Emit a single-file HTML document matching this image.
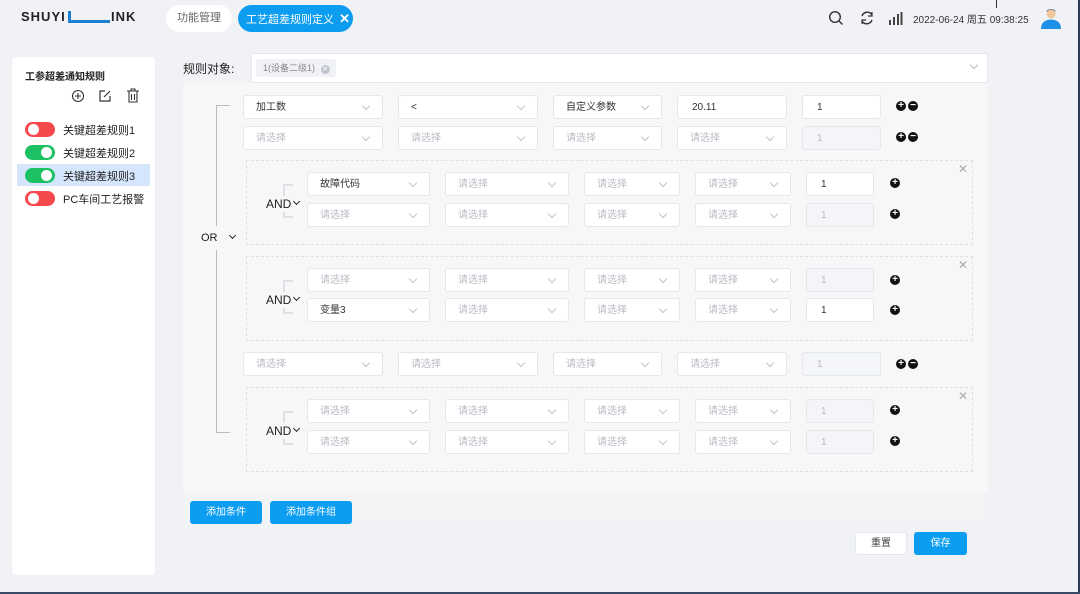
<!DOCTYPE html>
<html><head><meta charset="utf-8"><style>
*{margin:0;padding:0;box-sizing:border-box}
body{width:1080px;height:594px;background:#f0f2f5;font-family:"Liberation Sans","Noto Sans CJK SC",sans-serif;position:relative;overflow:hidden}
.a{position:absolute}
.s{position:absolute;height:24px;background:#fff;border:1px solid #e4e7ed;border-radius:3px;font-size:10px;color:#b8bcc4;padding-left:12px;line-height:24px}
.s.v{color:#333}
.s::after{content:"";position:absolute;right:13px;top:7px;width:5px;height:5px;border-right:1px solid #c0c4cc;border-bottom:1px solid #c0c4cc;transform:rotate(45deg)}
.i{position:absolute;height:24px;background:#fff;border:1px solid #e4e7ed;border-radius:3px;font-size:10px;color:#333;padding-left:14px;line-height:24px}
.i.d{background:#f3f5f9;color:#bbb}
.pm{position:absolute;width:10px;height:10px;border-radius:50%;background:#111;color:#fff;font-size:10px;line-height:10px;text-align:center;font-weight:bold}
.g{position:absolute;left:246px;width:727px;height:85px;border:1px dashed #e0e0e0}
.x{position:absolute;font-size:12px;color:#aaa;line-height:12px}
.and{position:absolute;font-size:12px;color:#222}
.br{position:absolute;left:283px;width:10px;height:34px;border:2px solid #dde0e6;border-right:none}
.tg{position:absolute;left:25px;width:30px;height:15px;border-radius:8px}
.tg::after{content:"";position:absolute;top:2px;width:11px;height:11px;border-radius:50%;background:#fff}
.r{background:#f5494e}.r::after{left:3px}
.gr{background:#1cc163}.gr::after{right:3px}
.it{position:absolute;left:63px;font-size:11px;color:#222}
.btn{position:absolute;height:23px;border-radius:3px;font-size:10px;text-align:center;line-height:23px}
</style></head><body>
<div class="a" style="left:996px;top:0;width:1px;height:8px;background:#333"></div>
<div class="a" style="right:0;top:0;width:2px;height:594px;background:#2a3a55"></div>
<div class="a" style="left:0;bottom:0;width:1080px;height:2px;background:#3a4a66"></div>
<!-- logo -->
<div class="a" style="left:21px;top:9px;font-size:13px;font-weight:bold;color:#222;letter-spacing:1px">SHUYI</div>
<div class="a" style="left:70px;top:20px;width:40px;height:3px;background:#1d7fd0"></div>
<div class="a" style="left:68px;top:11px;width:3px;height:12px;background:#1d7fd0"></div>
<div class="a" style="left:111px;top:9px;font-size:13px;font-weight:bold;color:#222;letter-spacing:1px">INK</div>
<!-- tabs -->
<div class="a" style="left:166px;top:5px;width:66px;height:27px;border-radius:14px;background:#fff;font-size:11px;color:#666;text-align:center;line-height:27px">功能管理</div>
<div class="a" style="left:238px;top:5px;width:115px;height:27px;border-radius:14px;background:#0c9cf0;font-size:11px;color:#fff;line-height:27px;padding-left:8px">工艺超差规则定义 <span style="font-size:13px;font-weight:bold;margin-left:2px">✕</span></div>
<!-- top right -->
<svg class="a" style="left:828px;top:10px" width="16" height="16"><circle cx="7" cy="7" r="5.3" fill="none" stroke="#333" stroke-width="1.4"/><line x1="11" y1="11" x2="14.5" y2="14.5" stroke="#333" stroke-width="1.4"/></svg>
<svg class="a" style="left:859px;top:10px" width="16" height="16"><path d="M3 6A5.5 5.5 0 0 1 13 5M13 10A5.5 5.5 0 0 1 3 11" fill="none" stroke="#333" stroke-width="1.4"/><path d="M13 2v4h-4M3 14v-4h4" fill="none" stroke="#333" stroke-width="1.2"/></svg>
<svg class="a" style="left:889px;top:12px" width="14" height="13"><rect x="0" y="8" width="2" height="5" fill="#444"/><rect x="4" y="5" width="2" height="8" fill="#444"/><rect x="8" y="2" width="2" height="11" fill="#444"/><rect x="11.5" y="0" width="2" height="13" fill="#444"/></svg>
<div class="a" style="left:913px;top:11px;font-size:10px;color:#333">2022-06-24 周五 09:38:25</div>
<svg class="a" style="left:1040px;top:7px" width="22" height="22"><circle cx="11" cy="7" r="4.5" fill="#f3c79c"/><path d="M6.5 5 Q11 0 15.5 5 L15 3.5 Q11 0.5 7 3.5Z" fill="#1d3a60"/><path d="M1 22 Q1 13 11 12.5 Q21 13 21 22Z" fill="#1e8fe6"/></svg>
<!-- left panel -->
<div class="a" style="left:12px;top:57px;width:143px;height:518px;background:#fff;border-radius:4px"></div>
<div class="a" style="left:25px;top:68px;font-size:10px;font-weight:bold;color:#222">工参超差通知规则</div>
<svg class="a" style="left:71px;top:89px" width="14" height="14"><circle cx="7" cy="7" r="5.5" fill="none" stroke="#333" stroke-width="1.1"/><path d="M7 4v6M4 7h6" stroke="#333" stroke-width="1.1"/></svg>
<svg class="a" style="left:98px;top:89px" width="14" height="14"><path d="M7 2H2v10h10V7" fill="none" stroke="#333" stroke-width="1.2"/><path d="M6 8l6-6" stroke="#333" stroke-width="1.2"/></svg>
<svg class="a" style="left:126px;top:88px" width="14" height="15"><path d="M1 3h12M5 3V1h4v2M3 3v11h8V3M5.5 6v6M8.5 6v6" fill="none" stroke="#333" stroke-width="1.1"/></svg>
<div class="a" style="left:17px;top:164px;width:133px;height:22px;background:#d5e5fb"></div>
<div class="tg r" style="top:122px"></div><div class="it" style="top:122px">关键超差规则1</div>
<div class="tg gr" style="top:145px"></div><div class="it" style="top:145px">关键超差规则2</div>
<div class="tg gr" style="top:168px"></div><div class="it" style="top:168px">关键超差规则3</div>
<div class="tg r" style="top:191px"></div><div class="it" style="top:191px">PC车间工艺报警</div>
<!-- rule object -->
<div class="a" style="left:183px;top:60px;font-size:12px;color:#222">规则对象:</div>
<div class="a" style="left:251px;top:53px;width:737px;height:30px;background:#fff;border:1px solid #e4e7ed;border-radius:3px"></div>
<div class="a" style="left:256px;top:59px;width:80px;height:18px;background:#f0f2f5;border-radius:3px;font-size:9px;color:#888;line-height:18px;padding-left:7px">1(设备二级1) <span style="display:inline-block;width:9px;height:9px;border-radius:50%;background:#c0c4cc;color:#fff;font-size:7px;line-height:9px;text-align:center;margin-left:3px">✕</span></div>
<div class="a" style="left:971px;top:62px;width:6px;height:6px;border-right:1px solid #bbb;border-bottom:1px solid #bbb;transform:rotate(45deg)"></div>
<!-- gray panel -->
<div class="a" style="left:183px;top:83px;width:805px;height:410px;background:#f7f7f8"></div>
<div class="a" style="left:183px;top:493px;width:805px;height:30px;background:#f2f3f5"></div>
<!-- OR bracket -->
<div class="a" style="left:216px;top:105px;width:14px;height:328px;border:1px solid #bbb;border-right:none"></div>
<div class="a" style="left:196px;top:226px;width:34px;height:24px;background:#f7f7f8"></div>
<div class="a" style="left:201px;top:232px;font-size:11px;color:#222">OR</div>
<div class="a" style="left:230px;top:233px;width:5px;height:5px;border-right:1.5px solid #222;border-bottom:1.5px solid #222;transform:rotate(45deg)"></div>
<!-- row 1 -->
<div class="s v" style="left:243px;top:95px;width:140px">加工数</div>
<div class="s v" style="left:398px;top:95px;width:140px">&lt;</div>
<div class="s v" style="left:553px;top:95px;width:109px">自定义参数</div>
<div class="i" style="left:677px;top:95px;width:110px">20.11</div>
<div class="i" style="left:802px;top:95px;width:79px">1</div>
<div class="pm" style="left:896px;top:101px">+</div><div class="pm" style="left:908px;top:101px">−</div>
<!-- row 2 -->
<div class="s" style="left:243px;top:126px;width:140px">请选择</div>
<div class="s" style="left:398px;top:126px;width:140px">请选择</div>
<div class="s" style="left:553px;top:126px;width:109px">请选择</div>
<div class="s" style="left:677px;top:126px;width:110px">请选择</div>
<div class="i d" style="left:802px;top:126px;width:79px">1</div>
<div class="pm" style="left:896px;top:132px">+</div><div class="pm" style="left:908px;top:132px">−</div>
<!-- group 1 -->
<div class="g" style="top:160px"></div><div class="x" style="left:958px;top:163px">✕</div>
<div class="br" style="top:184px"></div>
<div class="a" style="left:262px;top:196px;width:36px;height:16px;background:#f7f7f8"></div>
<div class="and" style="left:266px;top:197px">AND</div><div class="a" style="left:294px;top:199px;width:5px;height:5px;border-right:1.5px solid #222;border-bottom:1.5px solid #222;transform:rotate(45deg)"></div>
<div class="s v" style="left:307px;top:172px;width:123px">故障代码</div>
<div class="s" style="left:445px;top:172px;width:124px">请选择</div>
<div class="s" style="left:584px;top:172px;width:96px">请选择</div>
<div class="s" style="left:695px;top:172px;width:96px">请选择</div>
<div class="i" style="left:806px;top:172px;width:68px">1</div>
<div class="pm" style="left:890px;top:178px">+</div>
<div class="s" style="left:307px;top:203px;width:123px">请选择</div>
<div class="s" style="left:445px;top:203px;width:124px">请选择</div>
<div class="s" style="left:584px;top:203px;width:96px">请选择</div>
<div class="s" style="left:695px;top:203px;width:96px">请选择</div>
<div class="i d" style="left:806px;top:203px;width:68px">1</div>
<div class="pm" style="left:890px;top:209px">+</div>
<!-- group 2 -->
<div class="g" style="top:256px"></div><div class="x" style="left:958px;top:259px">✕</div>
<div class="br" style="top:280px"></div>
<div class="a" style="left:262px;top:292px;width:36px;height:16px;background:#f7f7f8"></div>
<div class="and" style="left:266px;top:293px">AND</div><div class="a" style="left:294px;top:295px;width:5px;height:5px;border-right:1.5px solid #222;border-bottom:1.5px solid #222;transform:rotate(45deg)"></div>
<div class="s" style="left:307px;top:268px;width:123px">请选择</div>
<div class="s" style="left:445px;top:268px;width:124px">请选择</div>
<div class="s" style="left:584px;top:268px;width:96px">请选择</div>
<div class="s" style="left:695px;top:268px;width:96px">请选择</div>
<div class="i d" style="left:806px;top:268px;width:68px">1</div>
<div class="pm" style="left:890px;top:275px">+</div>
<div class="s v" style="left:307px;top:298px;width:123px">变量3</div>
<div class="s" style="left:445px;top:298px;width:124px">请选择</div>
<div class="s" style="left:584px;top:298px;width:96px">请选择</div>
<div class="s" style="left:695px;top:298px;width:96px">请选择</div>
<div class="i" style="left:806px;top:298px;width:68px">1</div>
<div class="pm" style="left:890px;top:305px">+</div>
<!-- row 3 -->
<div class="s" style="left:243px;top:352px;width:140px">请选择</div>
<div class="s" style="left:398px;top:352px;width:140px">请选择</div>
<div class="s" style="left:553px;top:352px;width:109px">请选择</div>
<div class="s" style="left:677px;top:352px;width:110px">请选择</div>
<div class="i d" style="left:802px;top:352px;width:79px">1</div>
<div class="pm" style="left:896px;top:359px">+</div><div class="pm" style="left:908px;top:359px">−</div>
<!-- group 3 -->
<div class="g" style="top:387px"></div><div class="x" style="left:958px;top:390px">✕</div>
<div class="br" style="top:411px"></div>
<div class="a" style="left:262px;top:423px;width:36px;height:16px;background:#f7f7f8"></div>
<div class="and" style="left:266px;top:424px">AND</div><div class="a" style="left:294px;top:426px;width:5px;height:5px;border-right:1.5px solid #222;border-bottom:1.5px solid #222;transform:rotate(45deg)"></div>
<div class="s" style="left:307px;top:399px;width:123px">请选择</div>
<div class="s" style="left:445px;top:399px;width:124px">请选择</div>
<div class="s" style="left:584px;top:399px;width:96px">请选择</div>
<div class="s" style="left:695px;top:399px;width:96px">请选择</div>
<div class="i d" style="left:806px;top:399px;width:68px">1</div>
<div class="pm" style="left:890px;top:405px">+</div>
<div class="s" style="left:307px;top:430px;width:123px">请选择</div>
<div class="s" style="left:445px;top:430px;width:124px">请选择</div>
<div class="s" style="left:584px;top:430px;width:96px">请选择</div>
<div class="s" style="left:695px;top:430px;width:96px">请选择</div>
<div class="i d" style="left:806px;top:430px;width:68px">1</div>
<div class="pm" style="left:890px;top:436px">+</div>
<!-- buttons -->
<div class="btn" style="left:190px;top:501px;width:72px;background:#0c9cf0;color:#fff">添加条件</div>
<div class="btn" style="left:270px;top:501px;width:82px;background:#0c9cf0;color:#fff">添加条件组</div>
<div class="btn" style="left:855px;top:532px;width:52px;background:#fff;border:1px solid #e4e7ed;color:#444;line-height:21px">重置</div>
<div class="btn" style="left:914px;top:532px;width:53px;background:#0c9cf0;color:#fff">保存</div>
</body></html>
